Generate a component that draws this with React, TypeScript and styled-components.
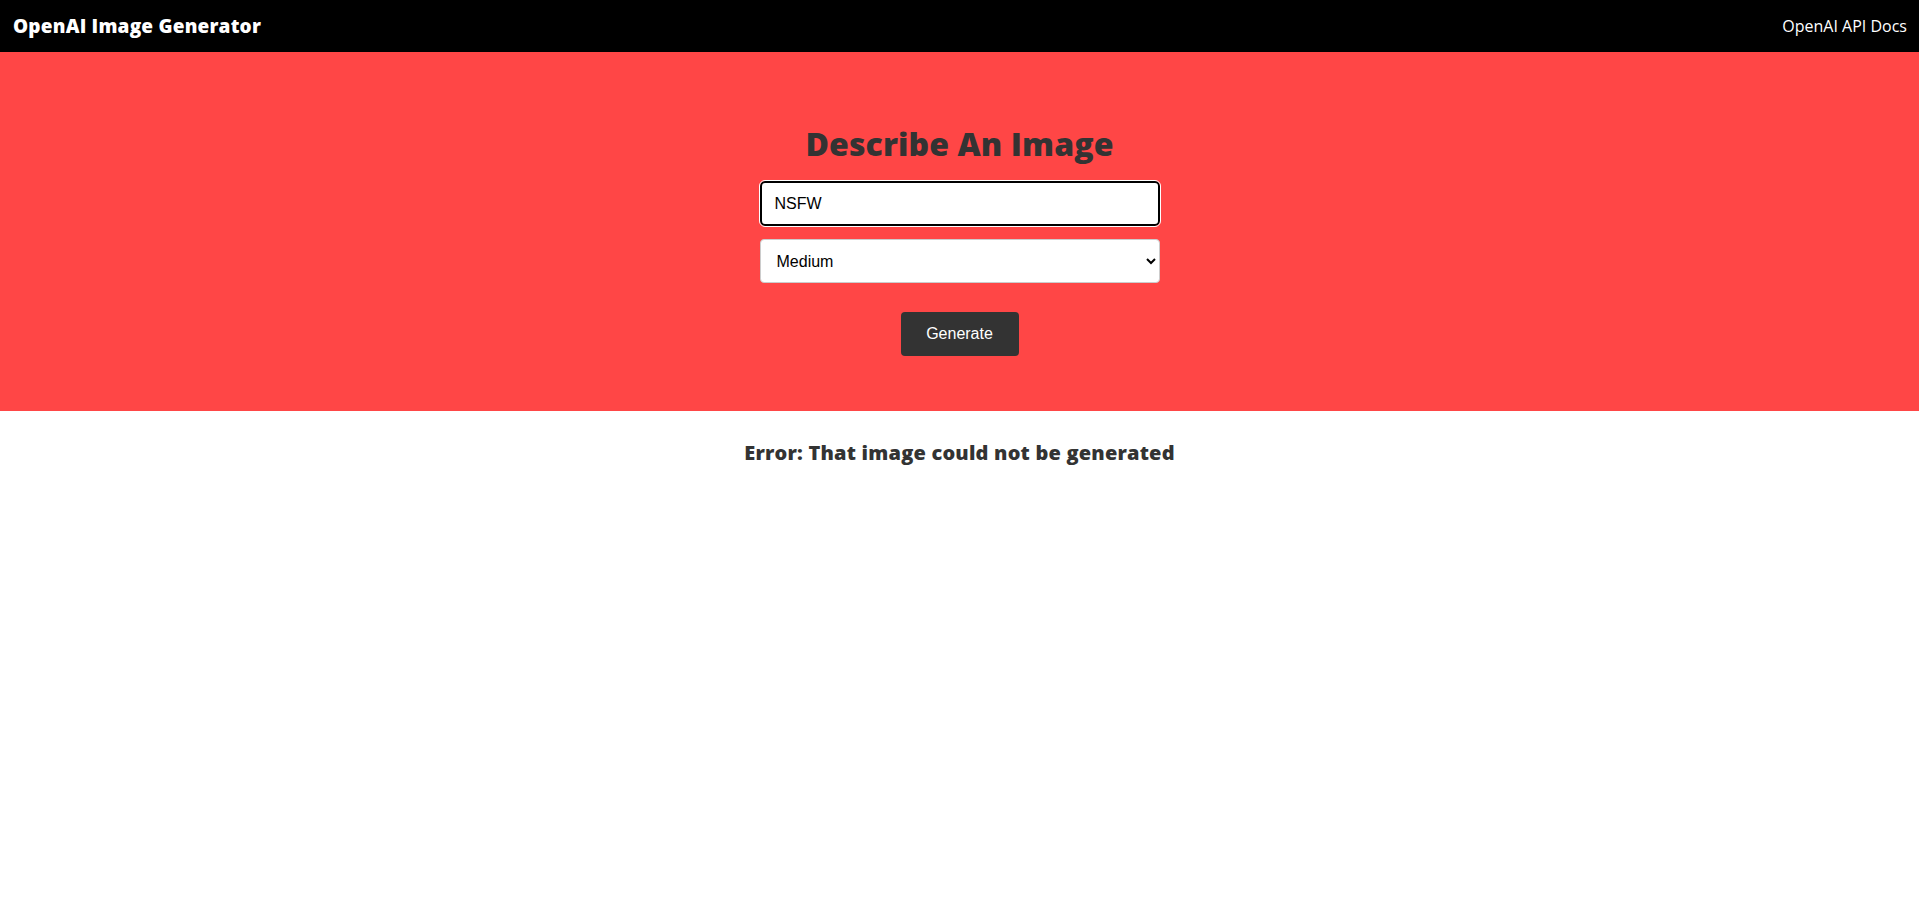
import React from "react";
import styled, { createGlobalStyle } from "styled-components";

const GlobalStyle = createGlobalStyle`
  * { box-sizing: border-box; }
  html, body { margin: 0; padding: 0; background: #fff; }
  body { font-family: "Open Sans", "Liberation Sans", sans-serif; color: #333; }
`;

const Navbar = styled.nav`
  height: 52px;
  background: #000;
  display: flex;
  align-items: center;
  justify-content: space-between;
  padding: 0 12px 0 13px;
`;

const Brand = styled.h1`
  margin: 0;
  color: #fff;
  font-family: "Open Sans", sans-serif;
  font-weight: 800;
  font-size: 19px;
  letter-spacing: 0.2px;
`;

const NavLink = styled.a`
  color: #fff;
  text-decoration: none;
  font-family: "Open Sans", sans-serif;
  font-size: 16px;
  font-weight: 500;
`;

const Showcase = styled.section`
  background: #ff4646;
  display: flex;
  flex-direction: column;
  align-items: center;
  padding: 72px 0 55px;
`;

const Title = styled.h2`
  margin: 0 0 17px;
  font-family: "Open Sans", sans-serif;
  font-weight: 800;
  font-size: 32px;
  line-height: 40px;
  letter-spacing: 0.1px;
  color: #333;
`;

const Form = styled.form`
  width: 400px;
  display: flex;
  flex-direction: column;
  align-items: center;
`;

const TextInput = styled.input`
  width: 100%;
  height: 45px;
  border: 2px solid #000;
  border-radius: 5px;
  padding: 0 13px;
  font-family: Arial, "Liberation Sans", sans-serif;
  font-size: 16px;
  color: #000;
  outline: 1px solid #fff;
  outline-offset: 0;
  background: #fff;
`;

const Select = styled.select`
  width: 100%;
  height: 44px;
  margin-top: 13px;
  border: 1px solid #ccc;
  border-radius: 4px;
  padding: 0 12px;
  font-family: Arial, "Liberation Sans", sans-serif;
  font-size: 16px;
  color: #000;
  background: #fff;
`;

const Button = styled.button`
  margin-top: 29px;
  width: 118px;
  height: 44px;
  border: none;
  border-radius: 4px;
  background: #333;
  color: #fff;
  font-family: Arial, "Liberation Sans", sans-serif;
  font-size: 16px;
  cursor: pointer;
`;

const Message = styled.p`
  margin: 28px 0 0;
  text-align: center;
  font-family: "Open Sans", sans-serif;
  font-weight: 800;
  font-size: 20px;
  line-height: 28px;
  letter-spacing: 0.2px;
  color: #333;
`;

export default function App() {
  return (
    <>
      <GlobalStyle />
      <Navbar>
        <Brand>OpenAI Image Generator</Brand>
        <NavLink href="#">OpenAI API Docs</NavLink>
      </Navbar>
      <main>
        <Showcase>
          <Title>Describe An Image</Title>
          <Form onSubmit={(e) => e.preventDefault()}>
            <TextInput type="text" defaultValue="NSFW" />
            <Select defaultValue="medium">
              <option value="small">Small</option>
              <option value="medium">Medium</option>
              <option value="large">Large</option>
            </Select>
            <Button type="submit">Generate</Button>
          </Form>
        </Showcase>
        <Message>Error: That image could not be generated</Message>
      </main>
    </>
  );
}
